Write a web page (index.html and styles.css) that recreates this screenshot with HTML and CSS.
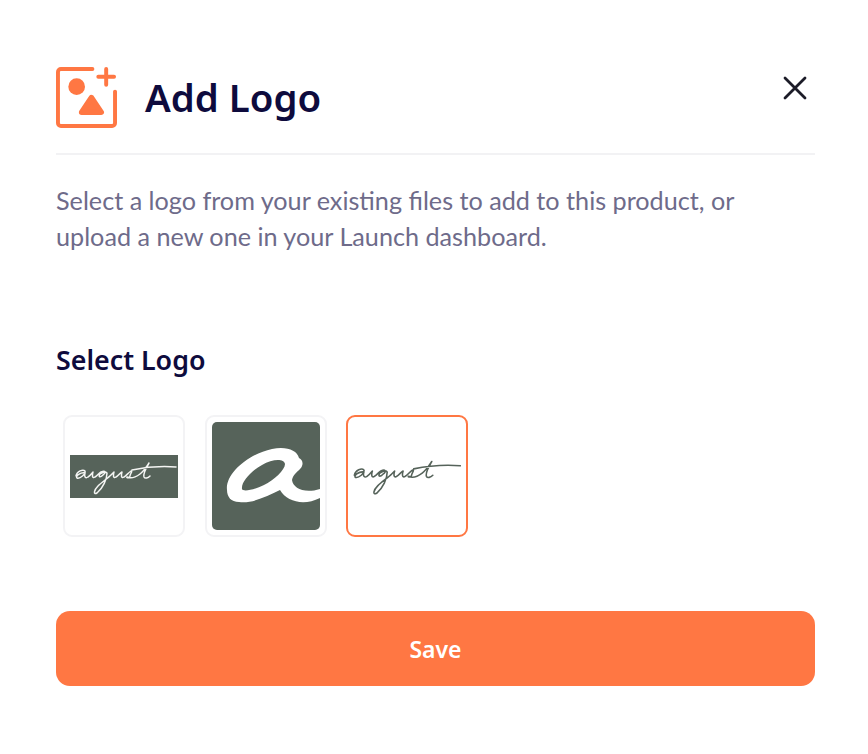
FILE: index.html
```html
<!DOCTYPE html>
<html lang="en">
<head>
    <meta charset="UTF-8">
    <meta name="viewport" content="width=device-width, initial-scale=1.0">
    <title>Add Logo</title>
    <link rel="stylesheet" href="styles.css">
</head>
<body>
    <div class="modal">
        <div class="modal-header">
            <svg class="add-icon" viewBox="0 0 62 62" width="61" height="61">
                <path d="M37 2H5a3 3 0 0 0-3 3v52a3 3 0 0 0 3 3h52a3 3 0 0 0 3-3V25" fill="none" stroke="#ff7743" stroke-width="4" stroke-linecap="round"/>
                <path d="M43 10H59M51 2V18" fill="none" stroke="#ff7743" stroke-width="4" stroke-linecap="round"/>
                <circle cx="21" cy="20" r="8.5" fill="#ff7743"/>
                <path d="M36 31L46 46H26Z" fill="#ff7743" stroke="#ff7743" stroke-width="5.5" stroke-linejoin="round"/>
            </svg>
            <h1>Add Logo</h1>
            <button class="close" aria-label="Close">
                <svg viewBox="0 0 24 24" width="24" height="24">
                    <path d="M2 2L22 22M22 2L2 22" fill="none" stroke="#1c1c28" stroke-width="2.8" stroke-linecap="round"/>
                </svg>
            </button>
        </div>
        <p class="intro">Select a logo from your existing files to add to this product, or upload a new one in your Launch dashboard.</p>
        <h2>Select Logo</h2>
        <div class="logo-list">
            <div class="logo-tile">
                <svg viewBox="0 0 108 43" width="108" height="43">
                    <rect width="108" height="43" fill="#56635a"/>
                    <path class="script light" d="M6 21C7 16 13 14 15 16C16 19 10 24 7 23C5 21 11 17 15 18C14 21 15 24 18 22C20 21 22 18 23 17C22 20 22 24 25 22C27 21 29 18 31 17C35 15 37 17 33 20C30 23 28 22 30 19C33 17 36 16 37 18C37 24 33 33 27 38C23 40 24 35 28 31C32 27 38 23 41 20L44 17C43 20 43 24 46 22C48 21 50 18 52 17C51 20 51 24 54 22C56 21 58 18 61 16C63 16 60 19 60 21C60 23 56 23 57 22C61 24 66 22 70 19C74 16 77 11 79 8C76 13 73 19 74 22C75 24 78 23 80 21M62 15C76 12 92 11 106 12"/>
                </svg>
            </div>
            <div class="logo-tile">
                <svg viewBox="0 0 108 108" width="108" height="108">
                    <rect width="108" height="108" rx="5" fill="#56635a"/>
                    <path d="M15 68C13 52 36 32 60 27C74 24 85 28 87 36C91 38 92 43 88 47C85 50 81 53 80 58C81 66 92 72 108 67V76C92 84 75 80 68 68C55 74 40 82 27 80C19 80 15 75 15 68ZM30 67C31 70 42 68 52 63C62 58 73 48 73 42C72 36 60 37 50 43C39 49 29 60 30 67Z" fill="#fff" fill-rule="evenodd"/>
                </svg>
            </div>
            <div class="logo-tile selected">
                <svg viewBox="0 0 108 43" width="108" height="43">
                    <path class="script dark" transform="translate(-5 -2) scale(1.06)" d="M6 21C7 16 13 14 15 16C16 19 10 24 7 23C5 21 11 17 15 18C14 21 15 24 18 22C20 21 22 18 23 17C22 20 22 24 25 22C27 21 29 18 31 17C35 15 37 17 33 20C30 23 28 22 30 19C33 17 36 16 37 18C37 24 33 33 27 38C23 40 24 35 28 31C32 27 38 23 41 20L44 17C43 20 43 24 46 22C48 21 50 18 52 17C51 20 51 24 54 22C56 21 58 18 61 16C63 16 60 19 60 21C60 23 56 23 57 22C61 24 66 22 70 19C74 16 77 11 79 8C76 13 73 19 74 22C75 24 78 23 80 21M62 15C76 12 92 11 106 12"/>
                </svg>
            </div>
        </div>
        <button class="save">Save</button>
    </div>
</body>
</html>
```

FILE: styles.css
```css
body {
    margin: 0;
    font-family: "Noto Sans", sans-serif;
    background: #fff;
}
.modal {
    padding: 67px 53px 0 56px;
}
.modal-header {
    display: flex;
    align-items: center;
    gap: 28px;
    padding-bottom: 25px;
    border-bottom: 2px solid #f2f2f4;
}
.add-icon {
    flex: none;
}
h1 {
    flex: 1;
    margin: 0;
    font-size: 38.4px;
    line-height: 61px;
    font-weight: 600;
    color: #0e0b3d;
}
.close {
    align-self: flex-start;
    margin: 9px 8px 0 0;
    padding: 0;
    border: 0;
    background: none;
    line-height: 0;
}
.intro {
    margin: 27px 40px 0 0;
    font-family: Lato, sans-serif;
    font-size: 25.2px;
    line-height: 36px;
    color: #6e6b8a;
}
h2 {
    margin: 86px 0 0;
    font-size: 26.8px;
    line-height: 40px;
    font-weight: 600;
    color: #0e0b3d;
}
.logo-list {
    display: flex;
    gap: 19.5px;
    margin: 35px 0 0 7px;
}
.logo-tile {
    display: flex;
    align-items: center;
    justify-content: center;
    box-sizing: border-box;
    width: 122px;
    height: 122px;
    border: 2px solid #f3f3f5;
    border-radius: 9px;
}
.logo-tile.selected {
    border-color: #ff7743;
}
.script {
    fill: none;
    stroke-width: 1.5;
    stroke-linecap: round;
    stroke-linejoin: round;
}
.script.light {
    stroke: #f4f5f3;
}
.script.dark {
    stroke: #56635a;
}
.save {
    display: block;
    width: 100%;
    height: 75px;
    margin-top: 74px;
    border: 0;
    border-radius: 14px;
    background: #ff7743;
    color: #fff;
    font-family: inherit;
    font-size: 23px;
    font-weight: 600;
}
```
